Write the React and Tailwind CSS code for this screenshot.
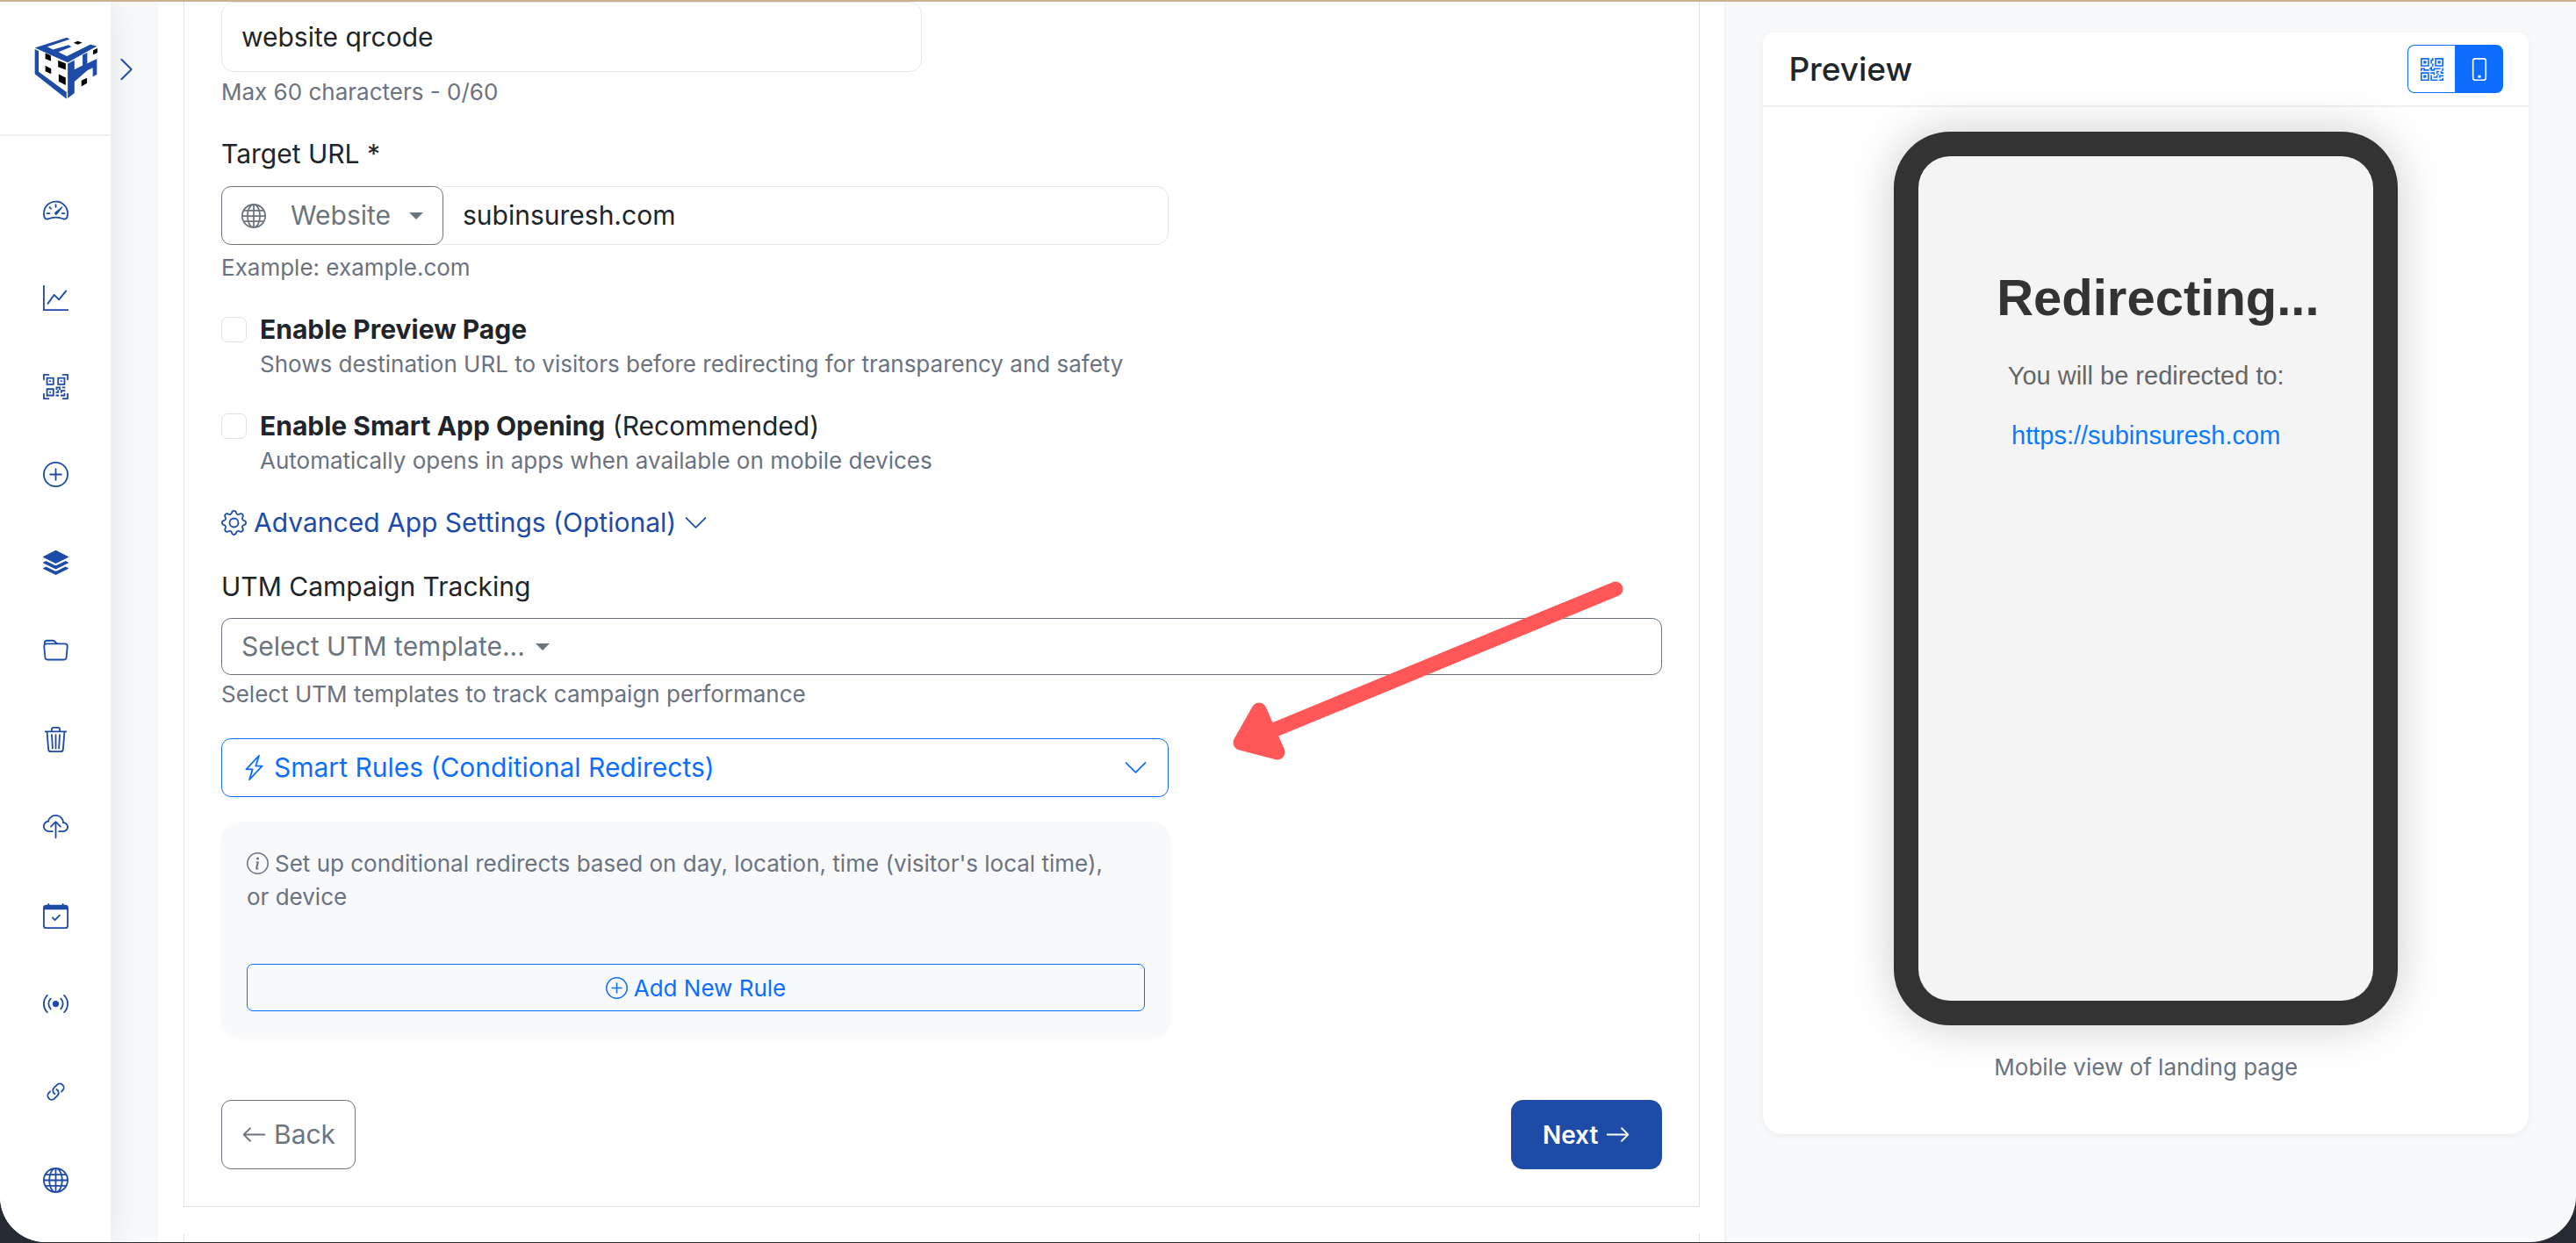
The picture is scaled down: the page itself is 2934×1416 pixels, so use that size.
import React, { useState } from "react";
import {
  BsArrowLeft,
  BsArrowRight,
  BsBroadcast,
  BsCalendarCheck,
  BsChevronDown,
  BsChevronRight,
  BsCloudUpload,
  BsFolder,
  BsGear,
  BsGlobe,
  BsGraphUp,
  BsInfoCircle,
  BsLightningCharge,
  BsLink45Deg,
  BsPhone,
  BsPlusCircle,
  BsQrCode,
  BsQrCodeScan,
  BsSpeedometer2,
  BsStack,
  BsTrash3,
} from "react-icons/bs";

const navItems = [
  { label: "Dashboard", icon: BsSpeedometer2 },
  { label: "Analytics", icon: BsGraphUp },
  { label: "QR codes", icon: BsQrCodeScan },
  { label: "Create", icon: BsPlusCircle },
  { label: "Bulk", icon: BsStack },
  { label: "Folders", icon: BsFolder },
  { label: "Trash", icon: BsTrash3 },
  { label: "Upload", icon: BsCloudUpload },
  { label: "Schedule", icon: BsCalendarCheck },
  { label: "Tracking", icon: BsBroadcast },
  { label: "Links", icon: BsLink45Deg },
  { label: "Domains", icon: BsGlobe },
];

function Logo() {
  return (
    <svg viewBox="60 36 220 214" className="h-[71px] w-[73px]" aria-hidden="true">
      <g fill="#1d4ba8">
        <path d="M62 74 172 38 182 44 105 70 124 80 178 64 188 70 143 88 172 102 252 62 275 68 175 124Z" />
        <path d="M62 78 75 84V156L171 226V249L62 163Z" />
        <path d="M175 128 198 116V148L226 134V98L242 90V127L275 111V165L261 173V142L242 151 198 190V229L175 247Z" />
      </g>
      <g fill="#000">
        <path d="M195 56 210 50 225 56 209 62Z" />
        <path d="M98 92 117 100V119L98 111Z" />
        <path d="M142 117 168 127V149L142 139Z" />
        <path d="M98 135 118 145V163L98 154Z" />
        <path d="M144 164 168 176V202L144 189Z" />
        <path d="M262 82 277 75V90L262 97Z" />
        <path d="M222 186 241 177V195L222 206Z" />
      </g>
    </svg>
  );
}

function Caret() {
  return (
    <svg viewBox="0 0 16 8" className="pointer-events-none h-2 w-4 shrink-0" aria-hidden="true">
      <path d="M0 0H16L8 8Z" fill="currentColor" />
    </svg>
  );
}

function Helper({ children }) {
  return <p className="text-[26px] leading-9 text-[#6b7280]">{children}</p>;
}

function CheckRow({ id, title, note, help, checked, onChange }) {
  return (
    <div className="mt-[30px] flex gap-[15px]">
      <input
        id={id}
        type="checkbox"
        checked={checked}
        onChange={(e) => onChange(e.target.checked)}
        className="mt-2 size-[29px] shrink-0 appearance-none rounded-[7px] border border-[#dfe1e4] bg-white checked:bg-[#0d6efd]"
      />
      <div>
        <label htmlFor={id} className="block text-[30px] leading-11">
          <strong className="font-bold">{title}</strong> {note}
        </label>
        <Helper>{help}</Helper>
      </div>
    </div>
  );
}

function Sidebar() {
  return (
    <aside className="relative z-10 flex w-[126px] shrink-0 flex-col bg-white text-[#1d4ba8] shadow-[0_0_36px_rgba(0,0,0,0.09)]">
      <div className="flex h-[153px] items-center justify-center border-b-2 border-[#eff0f2] pl-6">
        <Logo />
      </div>
      <nav className="flex flex-1 flex-col items-center justify-between pt-[70px] pb-14">
        {navItems.map((item) => (
          <a key={item.label} href="#" aria-label={item.label}>
            <item.icon className="size-[29px]" />
          </a>
        ))}
      </nav>
      <button aria-label="Expand menu" className="absolute top-[62px] left-[129px]">
        <BsChevronRight className="size-[30px]" />
      </button>
    </aside>
  );
}

function QrForm() {
  const [name, setName] = useState("website qrcode");
  const [url, setUrl] = useState("subinsuresh.com");
  const [previewPage, setPreviewPage] = useState(false);
  const [smartOpen, setSmartOpen] = useState(false);

  return (
    <div className="border-x border-b border-[#dfe1e4] px-[42px] pb-[42px]">
      <input
        type="text"
        aria-label="Name"
        value={name}
        onChange={(e) => setName(e.target.value)}
        className="block h-[80px] w-full max-w-[798px] rounded-[14px] border border-[#e5e7eb] px-[22px] text-[30px]"
      />
      <div className="mt-[5px]">
        <Helper>Max 60 characters - 0/60</Helper>
      </div>

      <label htmlFor="target" className="mt-[30px] block text-[30px] leading-11">
        Target URL *
      </label>
      <div className="mt-[15px] flex h-[67px] w-full max-w-[1079px]">
        <div className="flex shrink-0 items-center rounded-[11px] border border-[#6c757d] px-[22px] text-[#6c757d]">
          <BsGlobe className="size-7" />
          <select aria-label="Link type" className="ml-7 appearance-none text-[30px]">
            <option>Website</option>
          </select>
          <span className="ml-5">
            <Caret />
          </span>
        </div>
        <input
          id="target"
          type="text"
          value={url}
          onChange={(e) => setUrl(e.target.value)}
          className="min-w-0 flex-1 rounded-r-[14px] border border-l-0 border-[#e5e7eb] px-[22px] text-[30px]"
        />
      </div>
      <div className="mt-2">
        <Helper>Example: example.com</Helper>
      </div>

      <CheckRow
        id="preview-page"
        title="Enable Preview Page"
        help="Shows destination URL to visitors before redirecting for transparency and safety"
        checked={previewPage}
        onChange={setPreviewPage}
      />
      <CheckRow
        id="smart-open"
        title="Enable Smart App Opening"
        note="(Recommended)"
        help="Automatically opens in apps when available on mobile devices"
        checked={smartOpen}
        onChange={setSmartOpen}
      />

      <button className="mt-[30px] flex items-center text-[30px] leading-11 text-[#1d4ba8]">
        <BsGear className="mr-2 size-[29px]" />
        Advanced App Settings (Optional)
        <BsChevronDown className="ml-2 size-[29px]" />
      </button>

      <label htmlFor="utm" className="mt-[29px] block text-[30px] leading-11">
        UTM Campaign Tracking
      </label>
      <div className="mt-[14px] flex h-[65px] items-center rounded-[11px] border border-[#6c757d] px-[22px] text-[#6c757d]">
        <select id="utm" className="appearance-none text-[30px]">
          <option>Select UTM template...</option>
        </select>
        <span className="ml-3">
          <Caret />
        </span>
      </div>
      <div className="mt-1">
        <Helper>Select UTM templates to track campaign performance</Helper>
      </div>

      <button className="mt-8 flex h-[67px] w-full max-w-[1079px] items-center rounded-[11px] border border-[#0d6efd] px-[22px] text-[30px] text-[#0d6efd]">
        <BsLightningCharge className="mr-2 size-[29px]" />
        Smart Rules (Conditional Redirects)
        <BsChevronDown className="ml-auto size-[29px]" />
      </button>

      <div className="mt-7 w-full max-w-[1081px] rounded-[22px] bg-[#f8f9fb] p-[29px] shadow-[0_2px_6px_rgba(0,0,0,0.04)]">
        <p className="pr-10 text-[26px] leading-[38px] text-[#6b7280]">
          <BsInfoCircle className="mr-[7px] inline size-[25px] align-[-3px]" />
          Set up conditional redirects based on day, location, time (visitor's local time), or device
        </p>
        <button className="mt-[57px] flex h-[54px] w-full items-center justify-center rounded-[7px] border border-[#0d6efd] text-[26px] text-[#0d6efd]">
          <BsPlusCircle className="mr-[7px] size-[25px]" />
          Add New Rule
        </button>
      </div>

      <div className="mt-[72px] flex h-[79px] justify-between">
        <button className="flex items-center rounded-[11px] border border-[#6c757d] px-[22px] text-[30px] text-[#6c757d]">
          <BsArrowLeft className="mr-2 size-[29px]" />
          Back
        </button>
        <button className="flex items-center rounded-[14px] bg-[#1d4ba8] px-9 text-[28px] font-semibold text-white">
          Next
          <BsArrowRight className="ml-2 size-[29px]" />
        </button>
      </div>
    </div>
  );
}

function PreviewCard() {
  return (
    <div className="rounded-t-[12px] rounded-b-[22px] bg-white shadow-[0_2px_8px_rgba(0,0,0,0.05)]">
      <div className="flex h-[85px] items-center justify-between border-b-2 border-[#eff0f2] px-[29px]">
        <h2 className="text-[37px] font-medium">Preview</h2>
        <div className="flex h-[55px]">
          <button
            aria-label="QR code"
            className="flex w-[54px] items-center justify-center rounded-l-[8px] border border-r-0 border-[#0d6efd] text-[#0d6efd]"
          >
            <BsQrCode className="size-[26px]" />
          </button>
          <button
            aria-label="Mobile"
            className="flex w-[55px] items-center justify-center rounded-r-[8px] bg-[#0d6efd] text-white"
          >
            <BsPhone className="size-[26px]" />
          </button>
        </div>
      </div>
      <div className="flex flex-col items-center pt-7 pb-[58px]">
        <div className="h-[1018px] w-[574px] rounded-[64px] bg-[#333] p-7 shadow-[0_0_54px_rgba(0,0,0,0.2)]">
          <div className="h-full rounded-[36px] bg-[#f4f4f4] px-[89px] pt-[128px] text-center font-['Liberation_Sans',sans-serif]">
            <h1 className="text-[58px] leading-[66px] font-bold whitespace-nowrap text-[#333]">
              Redirecting...
            </h1>
            <p className="mt-10 text-[29px] leading-8 whitespace-nowrap text-[#666]">
              You will be redirected to:
            </p>
            <a href="#" className="mt-9 block text-[29px] leading-8 text-[#0a7bff]">
              https://subinsuresh.com
            </a>
          </div>
        </div>
        <div className="mt-[30px]">
          <Helper>Mobile view of landing page</Helper>
        </div>
      </div>
    </div>
  );
}

// red pointer laid over the form
function Pointer() {
  return (
    <svg
      viewBox="0 0 450 210"
      className="pointer-events-none absolute top-[658px] left-[1220px] z-20 h-[210px] w-[450px]"
      aria-hidden="true"
    >
      <path d="M440 11 50 172" stroke="#ff5757" strokeWidth="17" strokeLinecap="round" />
      <path
        d="M13 186 34 149 55 197Z"
        fill="#ff5757"
        stroke="#ff5757"
        strokeWidth="17"
        strokeLinejoin="round"
      />
    </svg>
  );
}

export default function App() {
  return (
    <div className="h-screen overflow-hidden bg-[#252a33] pb-px font-[Inter,sans-serif] text-[#212529]">
      <div className="flex h-full flex-col overflow-hidden rounded-b-[52px] border-t-2 border-[#cdb18f] bg-[#f7f9fb]">
        <div className="flex min-h-0 flex-1">
          <Sidebar />
          <div className="ml-[54px] grid min-w-0 flex-1 grid-cols-[24fr_13fr]">
            <main className="relative border-r-2 border-[#f1f2f4] bg-white pr-7 pl-[29px]">
              <QrForm />
              <div className="mt-[30px] h-10 border-x border-[#dfe1e4]" />
              <Pointer />
            </main>
            <section className="pt-[35px] pr-[54px] pl-[42px]">
              <PreviewCard />
            </section>
          </div>
        </div>
      </div>
    </div>
  );
}
